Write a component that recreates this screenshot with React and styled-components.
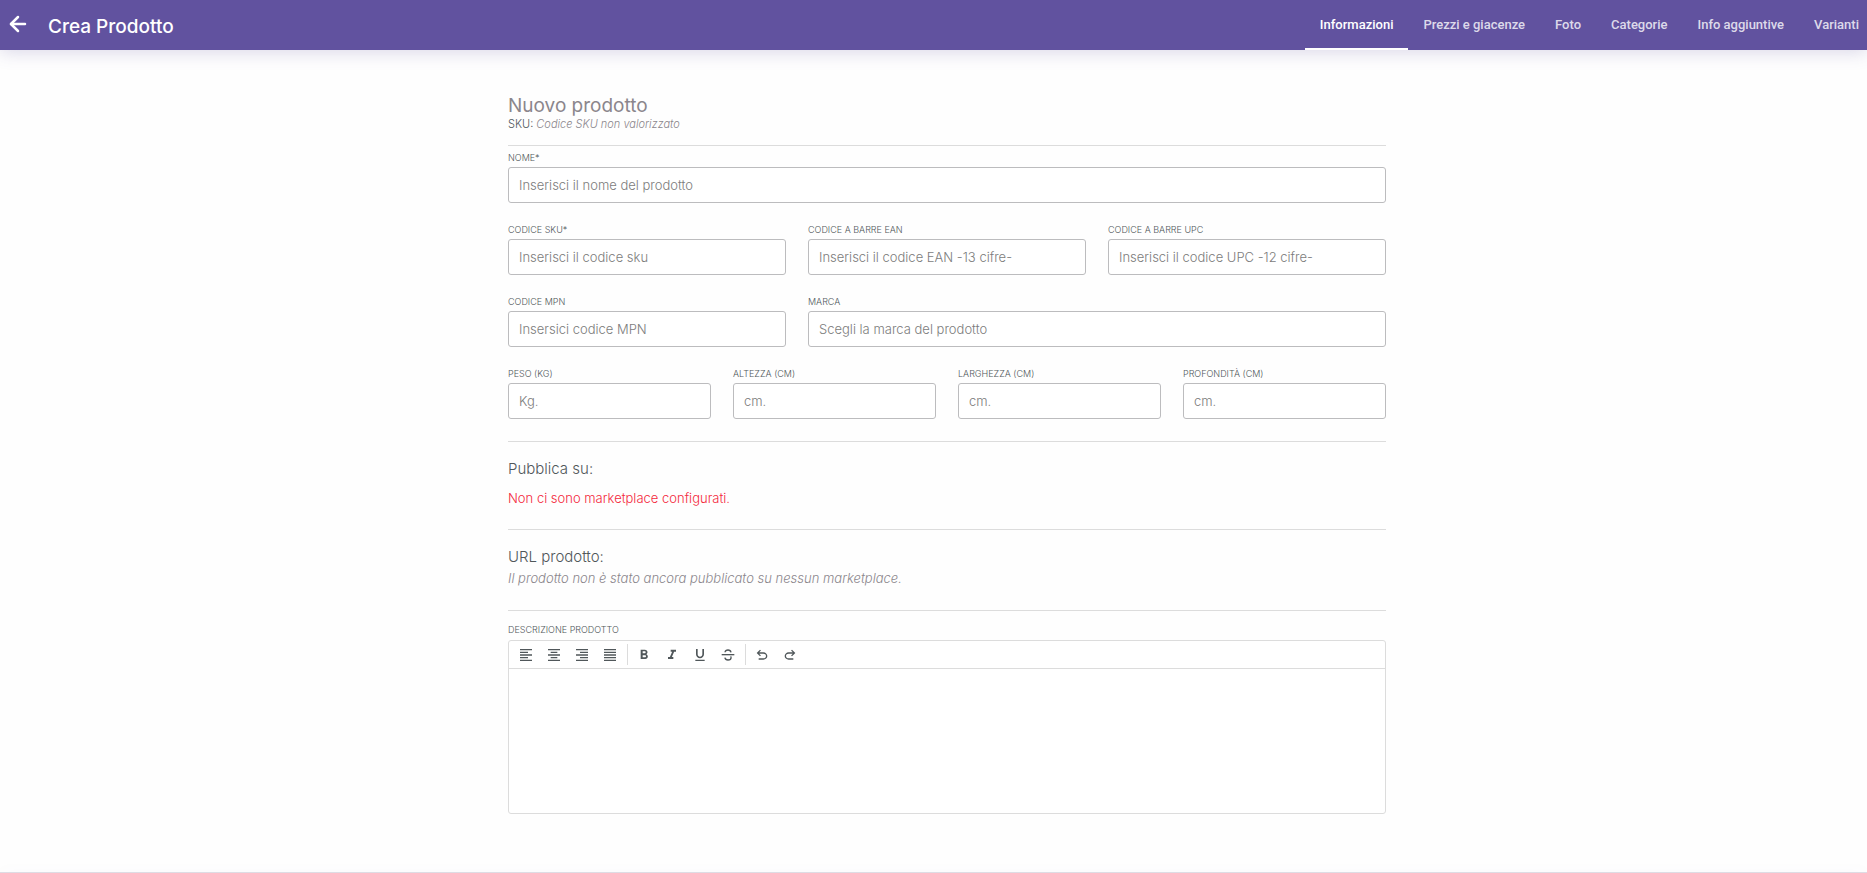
import React from 'react';
import styled, { createGlobalStyle, css } from 'styled-components';
import { ArrowLeft } from 'lucide-react';
import {
  MdFormatAlignLeft,
  MdFormatAlignCenter,
  MdFormatAlignRight,
  MdFormatAlignJustify,
  MdFormatBold,
  MdFormatItalic,
  MdFormatUnderlined,
} from 'react-icons/md';

const color = {
  brand: '#61529f',
  page: '#fefefe',
  text: '#50575a',
  muted: '#8b868c',
  placeholder: '#7c7c7c',
  inputBorder: '#bcbcbe',
  line: '#dcdcdc',
  danger: '#f4283c',
};

const GlobalStyle = createGlobalStyle`
  *, *::before, *::after { box-sizing: border-box; }
  body {
    margin: 0;
    background: ${color.page};
    color: ${color.text};
    font-family: Inter, "Open Sans", sans-serif;
    font-size: 13px;
    line-height: 20px;
  }
  h1, h2, h3, p { margin: 0; font-weight: 400; }
`;

const Page = styled.div`
  min-height: 100vh;
  display: flex;
  flex-direction: column;
`;

const Header = styled.header`
  display: flex;
  align-items: center;
  height: 50px;
  padding: 0 0 0 6px;
  background: ${color.brand};
  color: #fff;
  box-shadow: 0 2px 18px rgba(97, 82, 159, 0.24);
`;

const BackButton = styled.button`
  display: flex;
  margin-right: 18px;
  padding: 0 0 2px;
  border: 0;
  background: none;
  color: inherit;
  cursor: pointer;
`;

const PageTitle = styled.h1`
  padding-top: 3px;
  font-size: 19px;
  line-height: 24px;
  && { font-weight: 500; }
`;

const Tabs = styled.nav`
  display: flex;
  align-self: stretch;
  margin-left: auto;
`;

const Tab = styled.a`
  display: flex;
  align-items: center;
  padding: 2px 15px 0;
  border-bottom: 2px solid ${(p) => (p.$active ? '#fff' : 'transparent')};
  color: ${(p) => (p.$active ? '#fff' : 'rgba(255, 255, 255, 0.8)')};
  font: 500 13px/20px Roboto, sans-serif;
  text-decoration: none;
  white-space: nowrap;

  &:last-child { padding-right: 8px; }
`;

const Main = styled.main`
  flex: 1;
  display: flex;
  justify-content: center;
  padding: 44px 0 57px 27px;
`;

const Form = styled.form`
  width: 100%;
  max-width: 878px;
`;

const ProductName = styled.h2`
  color: ${color.muted};
  font-size: 19px;
  line-height: 24px;
`;

const SkuLine = styled.p`
  font-size: 11px;
  line-height: 12px;
  && { font-weight: 300; }
`;

const Empty = styled.em`
  color: ${color.muted};
`;

const Divider = styled.hr`
  height: 1px;
  margin: ${(p) => p.$top}px 0 ${(p) => p.$bottom}px;
  border: 0;
  background: ${color.line};
`;

const Rows = styled.div`
  display: flex;
  flex-direction: column;
  gap: 21px;
`;

const Row = styled.div`
  display: grid;
  grid-template-columns: repeat(${(p) => p.$columns}, 1fr);
  gap: 22px;
`;

const FieldBox = styled.div`
  display: flex;
  flex-direction: column;
  gap: ${(p) => p.$gap}px;
  min-width: 0;
  grid-column: span ${(p) => p.$span};
`;

const Label = styled.label`
  font-size: 9px;
  font-weight: 300;
  line-height: 12px;
  text-transform: uppercase;
`;

const Input = styled.input`
  width: 100%;
  height: 36px;
  padding: 0 10px;
  border: 1px solid ${color.inputBorder};
  border-radius: 3px;
  background: #fff;
  color: ${color.text};
  font: 300 13px/20px Inter, sans-serif;

  &::placeholder { color: ${color.placeholder}; opacity: 1; font-weight: 300; }
`;

const Section = styled.section`
  display: flex;
  flex-direction: column;
  gap: ${(p) => p.$gap}px;
`;

const SectionTitle = styled.h3`
  font-size: 15px;
  && { font-weight: 300; }
`;

const Note = styled.p`
  && { font-weight: 300; }
  ${(p) =>
    p.$error
      ? css`color: ${color.danger};`
      : css`color: ${color.muted}; font-style: italic;`}
`;

const Editor = styled.div`
  border: 1px solid ${color.line};
  border-radius: 3px;
  background: #fff;
`;

const Toolbar = styled.div`
  display: flex;
  align-items: center;
  height: 28px;
  padding: 0 3px;
  border-bottom: 1px solid ${color.line};
`;

const ToolGroup = styled.div`
  display: flex;

  & + & {
    margin-left: 3px;
    padding-left: 2px;
    border-left: 1px solid ${color.line};
  }
`;

const ToolButton = styled.button`
  display: flex;
  align-items: center;
  justify-content: center;
  width: 28px;
  height: 21px;
  padding: 0;
  border: 0;
  background: none;
  color: ${color.text};
  font-size: 16px;
  cursor: pointer;
`;

const EditorText = styled.textarea`
  display: block;
  width: 100%;
  height: 144px;
  padding: 10px;
  border: 0;
  outline: 0;
  background: transparent;
  color: ${color.text};
  font: 300 13px/20px Inter, sans-serif;
  resize: none;
`;

const Footer = styled.footer`
  border-top: 1px solid #dedce4;
  box-shadow: 0 0 14px rgba(97, 82, 159, 0.14);
`;

const turnPath =
  'M7 19v-2h7.1q1.575 0 2.738-1T18 13.5q0-1.5-1.162-2.5T14.1 10H7.8l2.6 2.6L9 14 4 9l5-5 1.4 1.4L7.8 8h6.3q2.425 0 4.163 1.575T20 13.5q0 2.35-1.737 3.925T14.1 19z';

const UndoIcon = () => (
  <svg width="16" height="16" viewBox="0 0 24 24" fill="currentColor" aria-hidden="true">
    <path d={turnPath} />
  </svg>
);

const RedoIcon = () => (
  <svg width="16" height="16" viewBox="0 0 24 24" fill="currentColor" aria-hidden="true">
    <path d={turnPath} transform="matrix(-1 0 0 1 24 0)" />
  </svg>
);

const StrikeIcon = () => (
  <svg width="16" height="16" viewBox="0 0 24 24" fill="none" stroke="currentColor" strokeWidth="2" aria-hidden="true">
    <path d="M2.5 11.5h19" />
    <path d="M16.5 8C16 5.5 14.5 4.5 12 4.5S7.6 5.8 7.6 8" />
    <path d="M7.3 16C7.8 18.5 9.5 19.5 12 19.5s4.6-1.3 4.6-3.5c0-.8-.2-1.4-.7-1.9" />
  </svg>
);

const tabs = ['Informazioni', 'Prezzi e giacenze', 'Foto', 'Categorie', 'Info aggiuntive', 'Varianti'];

const rows = [
  { columns: 1, fields: [{ id: 'nome', label: 'Nome*', hint: 'Inserisci il nome del prodotto' }] },
  {
    columns: 3,
    fields: [
      { id: 'sku', label: 'Codice SKU*', hint: 'Inserisci il codice sku' },
      { id: 'ean', label: 'Codice a barre EAN', hint: 'Inserisci il codice EAN -13 cifre-' },
      { id: 'upc', label: 'Codice a barre UPC', hint: 'Inserisci il codice UPC -12 cifre-' },
    ],
  },
  {
    columns: 3,
    fields: [
      { id: 'mpn', label: 'Codice MPN', hint: 'Insersici codice MPN' },
      { id: 'marca', label: 'Marca', hint: 'Scegli la marca del prodotto', span: 2 },
    ],
  },
  {
    columns: 4,
    fields: [
      { id: 'peso', label: 'Peso (kg)', hint: 'Kg.' },
      { id: 'altezza', label: 'Altezza (cm)', hint: 'cm.' },
      { id: 'larghezza', label: 'Larghezza (cm)', hint: 'cm.' },
      { id: 'profondita', label: 'Profondità (cm)', hint: 'cm.' },
    ],
  },
];

const toolGroups = [
  [
    ['Allinea a sinistra', MdFormatAlignLeft],
    ['Allinea al centro', MdFormatAlignCenter],
    ['Allinea a destra', MdFormatAlignRight],
    ['Giustifica', MdFormatAlignJustify],
  ],
  [
    ['Grassetto', MdFormatBold],
    ['Corsivo', MdFormatItalic],
    ['Sottolineato', MdFormatUnderlined],
    ['Barrato', StrikeIcon],
  ],
  [
    ['Annulla', UndoIcon],
    ['Ripeti', RedoIcon],
  ],
];

function Field({ id, label, hint, span = 1 }) {
  return (
    <FieldBox $span={span} $gap={3}>
      <Label htmlFor={id}>{label}</Label>
      <Input id={id} type="text" placeholder={hint} />
    </FieldBox>
  );
}

export default function App() {
  return (
    <Page>
      <GlobalStyle />
      <Header>
        <BackButton type="button" aria-label="Indietro">
          <ArrowLeft size={24} strokeWidth={2.5} />
        </BackButton>
        <PageTitle>Crea Prodotto</PageTitle>
        <Tabs>
          {tabs.map((name, i) => (
            <Tab key={name} href="#" $active={i === 0}>{name}</Tab>
          ))}
        </Tabs>
      </Header>
      <Main>
        <Form>
          <ProductName>Nuovo prodotto</ProductName>
          <SkuLine>
            SKU: <Empty>Codice SKU non valorizzato</Empty>
          </SkuLine>
          <Divider $top={15} $bottom={6} />
          <Rows>
            {rows.map((row, i) => (
              <Row key={i} $columns={row.columns}>
                {row.fields.map((f) => <Field key={f.id} {...f} />)}
              </Row>
            ))}
          </Rows>
          <Divider $top={22} $bottom={17} />
          <Section $gap={9}>
            <SectionTitle>Pubblica su:</SectionTitle>
            <Note $error>Non ci sono marketplace configurati.</Note>
          </Section>
          <Divider $top={21} $bottom={17} />
          <Section $gap={1}>
            <SectionTitle>URL prodotto:</SectionTitle>
            <Note>Il prodotto non è stato ancora pubblicato su nessun marketplace.</Note>
          </Section>
          <Divider $top={22} $bottom={13} />
          <FieldBox $span={1} $gap={4}>
            <Label htmlFor="descrizione">Descrizione prodotto</Label>
            <Editor>
              <Toolbar>
                {toolGroups.map((group, i) => (
                  <ToolGroup key={i}>
                    {group.map(([name, Icon]) => (
                      <ToolButton key={name} type="button" aria-label={name}>
                        <Icon />
                      </ToolButton>
                    ))}
                  </ToolGroup>
                ))}
              </Toolbar>
              <EditorText id="descrizione" />
            </Editor>
          </FieldBox>
        </Form>
      </Main>
      <Footer />
    </Page>
  );
}
